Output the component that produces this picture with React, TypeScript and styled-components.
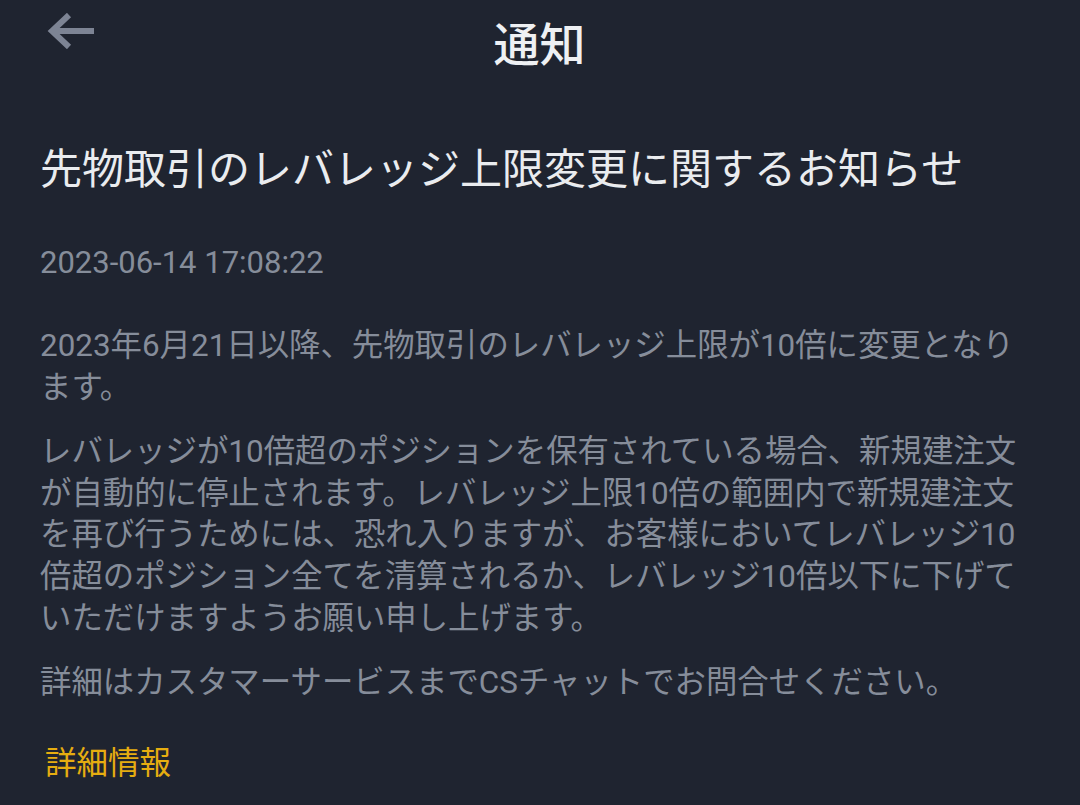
import React from 'react'
import styled, { createGlobalStyle } from 'styled-components'

const GlobalStyle = createGlobalStyle`
  html, body {
    margin: 0;
    padding: 0;
    background: #1f2430;
  }
  body {
    font-family: Roboto, "Noto Sans CJK JP", sans-serif;
  }
`

const Page = styled.div`
  min-height: 805px;
  background: #1f2430;
  padding: 0 41px 0 40px;
  box-sizing: border-box;
`

const Header = styled.header`
  display: grid;
  grid-template-columns: 1fr auto 1fr;
  height: 90px;
`

const BackButton = styled.button`
  justify-self: start;
  align-self: start;
  margin: 13px 0 0 7px;
  padding: 0;
  border: 0;
  background: transparent;
  color: #7d8494;
  display: flex;
  cursor: pointer;
`

const HeaderTitle = styled.div`
  font-size: 46px;
  font-weight: 500;
  line-height: 90px;
  color: #eef0f3;
`

const Title = styled.h1`
  margin: 52px 0 0;
  font-size: 42px;
  font-weight: 400;
  line-height: 56px;
  color: #eaecef;
`

const Timestamp = styled.div`
  margin-top: 44px;
  font-size: 31px;
  line-height: 42px;
  color: #868d9a;
`

const Body = styled.div`
  margin-top: 41px;
  display: flex;
  flex-direction: column;
  gap: 22.5px;
`

const Paragraph = styled.p`
  margin: 0;
  font-size: 31.4px;
  line-height: 41.7px;
  color: #868d9a;
`

const MoreLink = styled.a`
  display: inline-block;
  margin: 39px 0 0 5px;
  font-size: 31.5px;
  line-height: 42px;
  color: #e6ad10;
  text-decoration: none;
`

function ArrowLeft() {
  return (
    <svg width="48" height="36" viewBox="0 0 48 36" fill="none">
      <path d="M47 18H5M22 2L5 18L22 34" stroke="currentColor" strokeWidth="6" />
    </svg>
  )
}

export default function App() {
  return (
    <Page>
      <GlobalStyle />
      <Header>
        <BackButton aria-label="back">
          <ArrowLeft />
        </BackButton>
        <HeaderTitle>通知</HeaderTitle>
        <div />
      </Header>
      <Title>先物取引のレバレッジ上限変更に関するお知らせ</Title>
      <Timestamp>2023-06-14 17:08:22</Timestamp>
      <Body>
        <Paragraph>2023年6月21日以降、先物取引のレバレッジ上限が10倍に変更となります。</Paragraph>
        <Paragraph>
          レバレッジが10倍超のポジションを保有されている場合、新規建注文が自動的に停止されます。レバレッジ上限10倍の範囲内で新規建注文を再び行うためには、恐れ入りますが、お客様においてレバレッジ10倍超のポジション全てを清算されるか、レバレッジ10倍以下に下げていただけますようお願い申し上げます。
        </Paragraph>
        <Paragraph>詳細はカスタマーサービスまでCSチャットでお問合せください。</Paragraph>
      </Body>
      <MoreLink href="#">詳細情報</MoreLink>
    </Page>
  )
}
